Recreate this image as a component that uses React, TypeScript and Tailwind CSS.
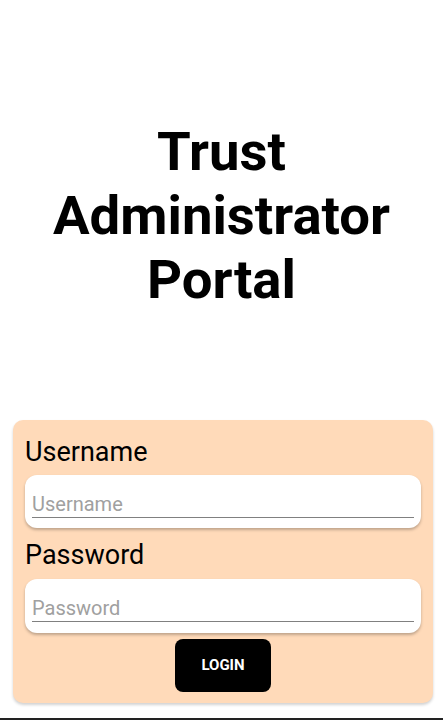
import React from "react";

export default function App() {
  return (
    <div className="relative w-[443px] h-[720px] bg-white overflow-hidden" style={{ fontFamily: "Roboto, 'Noto Sans', sans-serif" }}>
      <div className="h-[420px] pt-[119px] flex flex-col items-center">
        <h1 className="text-[54.5px] leading-[64px] font-bold text-black text-center">
          Trust
          <br />
          Administrator
          <br />
          Portal
        </h1>
      </div>
      <div className="ml-[13px] w-[420px] h-[283px] rounded-[10px] bg-[#ffdab9] shadow-[0_2px_3px_rgba(0,0,0,0.18)] px-[12px] pt-[17px] flex flex-col">
        <label className="text-[27px] leading-[30px] text-black">Username</label>
        <div className="mt-[8px] h-[53px] rounded-[12px] bg-white shadow-[0_2px_3px_rgba(0,0,0,0.25)] px-[7px] pt-[15px]">
          <input
            placeholder="Username"
            className="w-full h-[28px] text-[20px] leading-[24px] border-b border-[#808080] outline-none placeholder:text-[#a0a0a0] bg-transparent"
          />
        </div>
        <label className="mt-[12px] text-[27px] leading-[30px] text-black">Password</label>
        <div className="mt-[9px] h-[54px] rounded-[12px] bg-white shadow-[0_2px_3px_rgba(0,0,0,0.25)] px-[7px] pt-[15px]">
          <input
            type="password"
            placeholder="Password"
            className="w-full h-[28px] text-[20px] leading-[24px] border-b border-[#808080] outline-none placeholder:text-[#a0a0a0] bg-transparent"
          />
        </div>
        <div className="mt-[6px] flex justify-center">
          <button className="w-[96px] h-[53px] rounded-[8px] bg-black text-white text-[15px] font-bold">
            LOGIN
          </button>
        </div>
      </div>
      <div className="absolute left-0 bottom-0 w-full h-[2px] bg-[#222]" />
    </div>
  );
}
